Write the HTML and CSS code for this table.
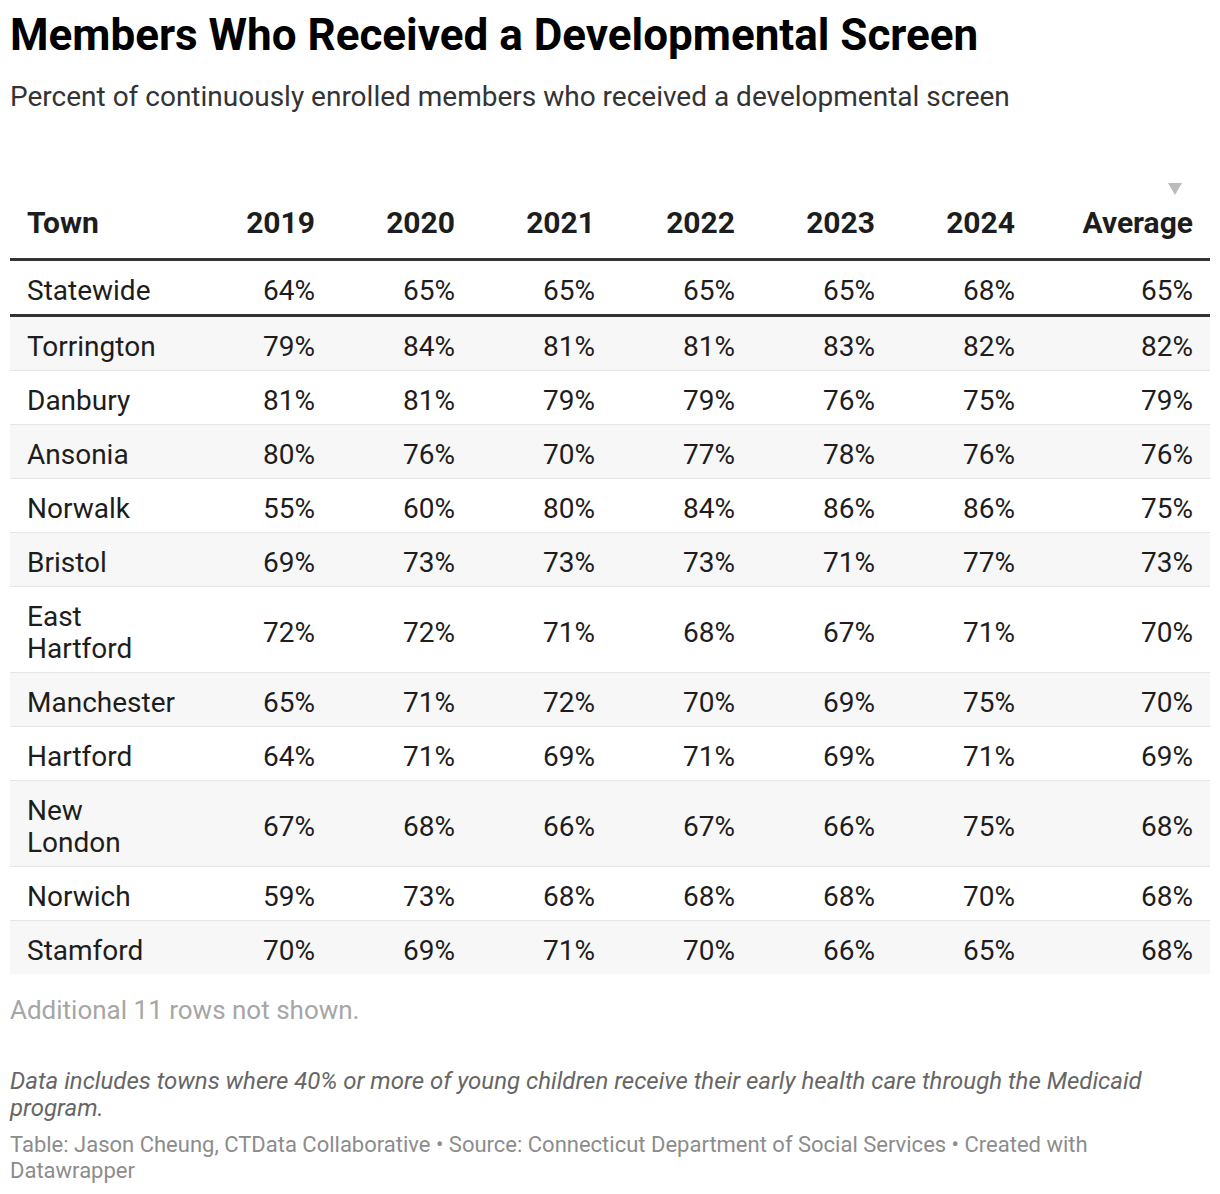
FILE: index.html
```html
<!DOCTYPE html>
<html lang="en">
<head>
<meta charset="utf-8">
<title>Members Who Received a Developmental Screen</title>
<link rel="stylesheet" href="styles.css">
</head>
<body>
<div class="chart">
  <h1 class="title">Members Who Received a Developmental Screen</h1>
  <p class="subtitle">Percent of continuously enrolled members who received a developmental screen</p>

  <div class="table">
    <div class="row head">
      <div class="cell town">Town</div>
      <div class="cell">2019</div>
      <div class="cell">2020</div>
      <div class="cell">2021</div>
      <div class="cell">2022</div>
      <div class="cell">2023</div>
      <div class="cell">2024</div>
      <div class="cell sorted">Average</div>
    </div>
    <div class="row pinned">
      <div class="cell town">Statewide</div>
      <div class="cell">64%</div><div class="cell">65%</div><div class="cell">65%</div><div class="cell">65%</div><div class="cell">65%</div><div class="cell">68%</div><div class="cell">65%</div>
    </div>
    <div class="row shade">
      <div class="cell town">Torrington</div>
      <div class="cell">79%</div><div class="cell">84%</div><div class="cell">81%</div><div class="cell">81%</div><div class="cell">83%</div><div class="cell">82%</div><div class="cell">82%</div>
    </div>
    <div class="row">
      <div class="cell town">Danbury</div>
      <div class="cell">81%</div><div class="cell">81%</div><div class="cell">79%</div><div class="cell">79%</div><div class="cell">76%</div><div class="cell">75%</div><div class="cell">79%</div>
    </div>
    <div class="row shade">
      <div class="cell town">Ansonia</div>
      <div class="cell">80%</div><div class="cell">76%</div><div class="cell">70%</div><div class="cell">77%</div><div class="cell">78%</div><div class="cell">76%</div><div class="cell">76%</div>
    </div>
    <div class="row">
      <div class="cell town">Norwalk</div>
      <div class="cell">55%</div><div class="cell">60%</div><div class="cell">80%</div><div class="cell">84%</div><div class="cell">86%</div><div class="cell">86%</div><div class="cell">75%</div>
    </div>
    <div class="row shade">
      <div class="cell town">Bristol</div>
      <div class="cell">69%</div><div class="cell">73%</div><div class="cell">73%</div><div class="cell">73%</div><div class="cell">71%</div><div class="cell">77%</div><div class="cell">73%</div>
    </div>
    <div class="row">
      <div class="cell town">East Hartford</div>
      <div class="cell">72%</div><div class="cell">72%</div><div class="cell">71%</div><div class="cell">68%</div><div class="cell">67%</div><div class="cell">71%</div><div class="cell">70%</div>
    </div>
    <div class="row shade">
      <div class="cell town">Manchester</div>
      <div class="cell">65%</div><div class="cell">71%</div><div class="cell">72%</div><div class="cell">70%</div><div class="cell">69%</div><div class="cell">75%</div><div class="cell">70%</div>
    </div>
    <div class="row">
      <div class="cell town">Hartford</div>
      <div class="cell">64%</div><div class="cell">71%</div><div class="cell">69%</div><div class="cell">71%</div><div class="cell">69%</div><div class="cell">71%</div><div class="cell">69%</div>
    </div>
    <div class="row shade">
      <div class="cell town">New London</div>
      <div class="cell">67%</div><div class="cell">68%</div><div class="cell">66%</div><div class="cell">67%</div><div class="cell">66%</div><div class="cell">75%</div><div class="cell">68%</div>
    </div>
    <div class="row">
      <div class="cell town">Norwich</div>
      <div class="cell">59%</div><div class="cell">73%</div><div class="cell">68%</div><div class="cell">68%</div><div class="cell">68%</div><div class="cell">70%</div><div class="cell">68%</div>
    </div>
    <div class="row shade last">
      <div class="cell town">Stamford</div>
      <div class="cell">70%</div><div class="cell">69%</div><div class="cell">71%</div><div class="cell">70%</div><div class="cell">66%</div><div class="cell">65%</div><div class="cell">68%</div>
    </div>
  </div>

  <p class="more">Additional 11 rows not shown.</p>

  <p class="notes">Data includes towns where 40% or more of young children receive their early health care through the Medicaid program.</p>
  <p class="credit">Table: Jason Cheung, CTData Collaborative • Source: Connecticut Department of Social Services • Created with Datawrapper</p>
</div>
</body>
</html>
```

FILE: styles.css
```css
html, body {
  margin: 0;
  padding: 0;
  background: #ffffff;
}

body {
  font-family: Roboto, "Liberation Sans", sans-serif;
  color: #1d1d1d;
}

.chart {
  padding: 10px 10px 0 10px;
}

.title {
  margin: 0;
  font-size: 44px;
  line-height: 50px;
  font-weight: 700;
  color: #000000;
}

.subtitle {
  margin: 20px 0 0 0;
  font-size: 28px;
  line-height: 34px;
  color: #333333;
}

.table {
  margin-top: 50px;
  display: flex;
  flex-direction: column;
}

.row {
  display: grid;
  grid-template-columns: 182px repeat(6, 140px) 1fr;
  align-items: center;
  border-bottom: 1px solid #e6e6e6;
  font-size: 28px;
  line-height: 32px;
}

.row.shade {
  background: #f7f7f7;
}

.row.head {
  font-weight: 700;
  font-size: 30px;
  line-height: 36px;
  border-bottom: 3px solid #333333;
  align-items: end;
}

.row.head .cell {
  padding-top: 41px;
  padding-bottom: 17px;
}

.row.pinned {
  border-bottom: 3px solid #333333;
}

.row.last {
  border-bottom: none;
}

.cell {
  padding: 13.5px 17px 7.5px 17px;
  text-align: right;
}

.cell.town {
  text-align: left;
  padding-right: 14px;
}

.cell.sorted {
  position: relative;
}

.cell.sorted::before {
  content: "";
  position: absolute;
  right: 28px;
  top: 19px;
  width: 0;
  height: 0;
  border-left: 7px solid transparent;
  border-right: 7px solid transparent;
  border-top: 12px solid #bbbbbb;
}

.more {
  margin: 20px 0 0 0;
  font-size: 26px;
  line-height: 32px;
  color: #a6a6a6;
}

.notes {
  margin: 42px 0 0 0;
  font-size: 24px;
  line-height: 27px;
  font-style: italic;
  color: #666666;
}

.credit {
  margin: 10px 0 0 0;
  font-size: 22px;
  line-height: 26px;
  color: #8c8c8c;
}
```
